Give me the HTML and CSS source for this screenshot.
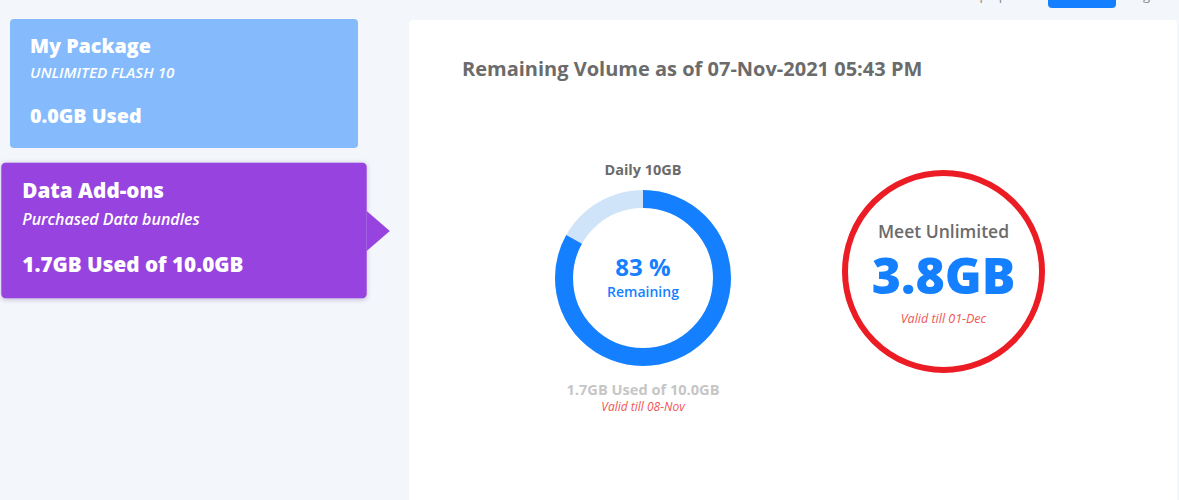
FILE: index.html
```html
<!DOCTYPE html>
<html lang="en">
<head>
    <meta charset="UTF-8">
    <meta name="viewport" content="width=device-width, initial-scale=1.0">
    <title>My Usage</title>
    <link rel="stylesheet" href="styles.css">
</head>
<body>
    <div class="topbar">
        <span class="top-link">Top up</span>
        <span class="top-button">Sign in</span>
        <span class="top-link">Eng</span>
    </div>

    <div class="page">
        <div class="packages">
            <div class="package package-main">
                <div class="package-title">My Package</div>
                <div class="package-sub upper">UNLIMITED FLASH 10</div>
                <div class="package-used">0.0GB Used</div>
            </div>
            <div class="package package-addons active">
                <div class="package-title">Data Add-ons</div>
                <div class="package-sub">Purchased Data bundles</div>
                <div class="package-used">1.7GB Used of 10.0GB</div>
            </div>
        </div>

        <div class="panel">
            <h2 class="panel-title">Remaining Volume as of 07-Nov-2021 05:43 PM</h2>

            <div class="usage-row">
                <div class="usage-daily">
                    <div class="usage-name">Daily 10GB</div>
                    <div class="donut">
                        <svg width="176" height="176" viewBox="0 0 176 176">
                            <circle cx="88" cy="88" r="79" fill="none" stroke="#cfe4f8" stroke-width="18"/>
                            <!-- 83% of 2*pi*79 = 412 -->
                            <circle cx="88" cy="88" r="79" fill="none" stroke="#1580ff" stroke-width="18"
                                    stroke-dasharray="412 500" transform="rotate(-90 88 88)"/>
                        </svg>
                        <div class="donut-label">
                            <div class="donut-pct">83 %</div>
                            <div class="donut-text">Remaining</div>
                        </div>
                    </div>
                    <div class="usage-used">1.7GB Used of 10.0GB</div>
                    <div class="valid">Valid till 08-Nov</div>
                </div>

                <div class="unlimited">
                    <div class="unlimited-name">Meet Unlimited</div>
                    <div class="unlimited-amount">3.8GB</div>
                    <div class="valid">Valid till 01-Dec</div>
                </div>
            </div>
        </div>
    </div>
</body>
</html>
```

FILE: styles.css
```css
* {
    margin: 0;
    padding: 0;
    box-sizing: border-box;
}

body {
    font-family: 'Open Sans', 'Noto Sans', sans-serif;
    background-color: #f3f6fb;
    color: #6b6b6b;
    height: 100vh;
    overflow: hidden;
}

.topbar {
    height: 8px;
    overflow: hidden;
    display: flex;
    justify-content: flex-end;
    align-items: flex-end;
    padding-right: 29px;
}

.top-link {
    font-size: 13px;
    line-height: 18px;
    color: #8a8a8a;
    margin-bottom: 4px;
}

.top-button {
    width: 68px;
    height: 34px;
    margin: 0 12px 0 41px;
    border-radius: 4px;
    background-color: #1580ff;
    color: #fff;
    font-size: 13px;
    text-align: center;
    line-height: 34px;
}

.page {
    display: flex;
    align-items: flex-start;
    padding: 11px 2px 0 10px;
}

.packages {
    width: 348px;
    display: flex;
    flex-direction: column;
    gap: 18px;
    margin-right: 51px;
}

.package {
    position: relative;
    height: 129px;
    padding: 14px 20px 0 20px;
    border-radius: 4px;
    color: #fff;
}

.package-main {
    background-color: #85bbfc;
}

.package-addons {
    background-color: #9643e0;
}

.package.active {
    transform: scale(1.05);
    box-shadow: 0 1px 4px rgba(80, 40, 140, 0.25);
}

/* pointer towards the panel */
.package.active::after {
    content: '';
    position: absolute;
    left: 100%;
    top: 50%;
    margin-top: -19px;
    border-top: 19px solid transparent;
    border-bottom: 19px solid transparent;
    border-left: 22px solid #9643e0;
}

.package-title {
    font-size: 19.7px;
    font-weight: 800;
    line-height: 26px;
}

.package-sub {
    font-size: 15.2px;
    font-weight: 600;
    font-style: italic;
    line-height: 20px;
    margin-top: 3px;
}

.package-used {
    font-size: 19.7px;
    font-weight: 800;
    line-height: 26px;
    margin-top: 21px;
}

.panel {
    flex: 1;
    min-height: 560px;
    margin-top: 1px;
    background-color: #fff;
    border-radius: 4px;
    padding: 36px 0 0 53px;
}

.panel-title {
    font-size: 20px;
    font-weight: 700;
    line-height: 25px;
    color: #6b6b6b;
}

.usage-row {
    display: flex;
    align-items: flex-start;
    margin: 79px 0 0 93px;
}

.usage-daily {
    width: 176px;
    display: flex;
    flex-direction: column;
    align-items: center;
}

.usage-name {
    font-size: 14.5px;
    font-weight: 700;
    line-height: 19px;
    color: #6b6b6b;
}

.donut {
    position: relative;
    width: 176px;
    height: 176px;
    margin-top: 11px;
}

.donut svg {
    display: block;
}

.donut-label {
    position: absolute;
    inset: 0;
    display: flex;
    flex-direction: column;
    align-items: center;
    justify-content: center;
    color: #1580ff;
    padding-bottom: 2px;
}

.donut-pct {
    font-size: 24px;
    font-weight: 700;
    line-height: 30px;
}

.donut-text {
    font-size: 14px;
    font-weight: 600;
    line-height: 20px;
}

.usage-used {
    font-size: 14.6px;
    font-weight: 700;
    line-height: 19px;
    color: #c6c6c6;
    margin-top: 14px;
    white-space: nowrap;
}

.valid {
    font-size: 12px;
    font-style: italic;
    line-height: 16px;
    color: #f05656;
    white-space: nowrap;
}

.unlimited {
    width: 203px;
    height: 203px;
    margin: 10px 0 0 111px;
    border: 6px solid #ec1c24;
    border-radius: 50%;
    display: flex;
    flex-direction: column;
    align-items: center;
    justify-content: center;
    padding-top: 3px;
}

.unlimited-name {
    font-size: 17.5px;
    font-weight: 600;
    line-height: 24px;
    color: #6b6b6b;
}

.unlimited-amount {
    font-size: 50px;
    font-weight: 800;
    line-height: 56px;
    color: #1580ff;
    margin: 4px 0 5px;
}

.unlimited .valid {
    font-size: 12.5px;
    margin-top: 3px;
}
```
